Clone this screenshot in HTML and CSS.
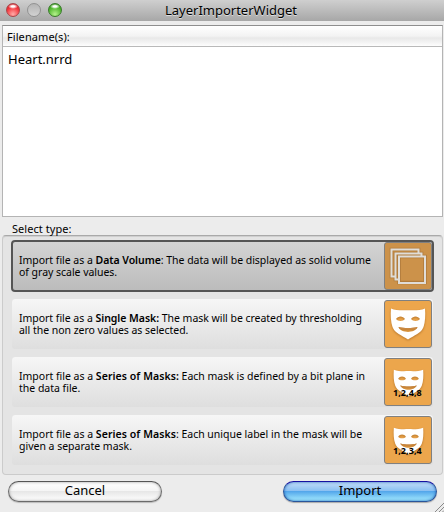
FILE: index.html
```html
<!DOCTYPE html>
<html lang="en">
<head>
<meta charset="utf-8">
<title>LayerImporterWidget</title>
<link rel="stylesheet" href="styles.css">
</head>
<body>
<svg class="defs" width="0" height="0">
  <defs>
    <symbol id="mask" viewBox="0 0 36 32">
      <path fill="#fff" fill-rule="evenodd" d="M1 .5C6 2.6 12 2.4 18 2.2C24 2.4 30 2.6 35 .5C35.6 7 35.2 14 33.5 19C31.5 25 24 27.500 18 31.500C12 27.500 4.500 25 2.500 19C.8 14 .4 7 1 .5ZM6 11C8 7.500 13 7.500 15 11C13 13.600 8 13.600 6 11ZM21 11C23 7.500 28 7.500 30 11C28 13.600 23 13.600 21 11ZM8.500 19C14 20.500 22 20.500 27.500 19C25 25.500 11 25.500 8.500 19Z"/>
      <path fill="#c98842" d="M8.500 19C14 20.500 22 20.500 27.500 19L26.500 20.700C22 21.700 14 21.700 9.500 20.700Z"/>
    </symbol>
  </defs>
</svg>
<div class="window">
  <header class="titlebar">
    <div class="lights"><i class="light red"></i><i class="light gray"></i><i class="light green"></i></div>
    <h1>LayerImporterWidget</h1>
  </header>
  <main>
    <section class="files">
      <div class="files-head">Filename(s):</div>
      <div class="files-row">Heart.nrrd</div>
    </section>
    <div class="group-label">Select type:</div>
    <section class="group">
      <div class="option selected">
        <p>Import file as a <b>Data Volume</b>: The data will be displayed as solid volume<br>of gray scale values.</p>
        <div class="icon"><svg width="46" height="46" viewBox="0 0 46 46"><g fill="#cc924a" stroke="#b07b3c" stroke-width="3.600"><path d="M6.500 6.500h27v27h-27z"/><path d="M10.500 10.500h26v26h-26z"/><path d="M14 13.500h26v26h-26z"/></g><g fill="none" stroke="#e0ddd8" stroke-width="2"><path d="M10 33.500H6.500v-27h27V10"/><path d="M13.500 36.500h-3v-26h26v3"/><path d="M14 13.500h26v26.500h-26z"/></g></svg></div>
      </div>
      <div class="option">
        <p>Import file as a <b>Single Mask:</b> The mask will be created by thresholding<br>all the non zero values as selected.</p>
        <div class="icon"><svg class="big" width="36" height="32"><use href="#mask"/></svg></div>
      </div>
      <div class="option series">
        <p>Import file as a <b>Series of Masks:</b> Each mask is defined by a bit plane in<br>the data file.</p>
        <div class="icon"><svg class="small" width="31" height="28"><use href="#mask"/></svg><span class="nums">1,2,4,8</span></div>
      </div>
      <div class="option series">
        <p>Import file as a <b>Series of Masks</b>: Each unique label in the mask will be<br>given a separate mask.</p>
        <div class="icon"><svg class="small" width="31" height="28"><use href="#mask"/></svg><span class="nums">1,2,3,4</span></div>
      </div>
    </section>
  </main>
  <footer>
    <button class="btn">Cancel</button>
    <button class="btn primary">Import</button>
  </footer>
  <svg class="grip" width="9" height="9"><path d="M0 9L9 0M4 9L9 4M7.500 9L9 7.500" stroke="#8a8a8a" fill="none"/></svg>
</div>
</body>
</html>
```
FILE: styles.css
```css
* { box-sizing: border-box; }
body { margin: 0; font-family: "Noto Sans", sans-serif; color: #000; }
.defs { position: absolute; }
.window { position: relative; width: 444px; height: 512px; background: #ececec; overflow: hidden; }
.titlebar { position: relative; height: 21px; background: linear-gradient(#cfcfcf, #a7a7a7); }
.titlebar h1 { margin: 0; text-align: center; font-size: 13px; font-weight: 400; line-height: 21px; padding-left: 18px; text-shadow: 0 1px 0 #ddd; }
.lights { position: absolute; left: 6px; top: 3px; display: flex; gap: 7px; }
.light { width: 14px; height: 14px; border-radius: 50%; border: 1px solid #777; }
.red { background: radial-gradient(ellipse 5px 2.500px at 50% 20%, #fff 0 30%, transparent), radial-gradient(circle at 50% 85%, #ffaca8, #f4333a 60%, #bd0f18); border-color: #a8474a; }
.gray { background: linear-gradient(#b4b4b4, #d2d2d2); border-color: #929292; }
.green { background: radial-gradient(ellipse 5px 2.500px at 50% 20%, #fff 0 30%, transparent), radial-gradient(circle at 50% 85%, #b4f18b, #4fb62d 60%, #21820d); border-color: #397a2b; }
main { padding: 4px 1px 0 2px; }
.files { height: 192px; border: 1px solid #b4b4b4; border-top-color: #8e8e8e; background: #fff; white-space: nowrap; width: 441px; }
.files-head { height: 21px; border-bottom: 1px solid #b9b9b9; background: linear-gradient(#fff, #f3f3f3 50%, #e8e8e8 60%, #fdfdfd); font-size: 11px; letter-spacing: .08px; line-height: 22px; padding-left: 4px; }
.files-row { font-size: 13px; line-height: 24px; padding-left: 5px; }
.group-label { height: 18px; padding: 4px 0 0 10px; font-size: 11px; letter-spacing: .06px; line-height: 15px; }
.group { height: 240px; border: 1px solid #cbcbcb; border-top-color: #a9a9a9; box-shadow: inset 0 1px 0 #cfcfcf; border-radius: 4px; background: #e4e4e4; padding: 4px 8px 0 8px; display: flex; flex-direction: column; gap: 6px; }
.option { height: 52px; border-radius: 4px; background: linear-gradient(#f6f6f6, #dedede); border: 1px solid #e4e4e4; padding: 1px 1px 1px 7px; display: flex; justify-content: space-between; align-items: center; }
.option p { margin: 0; font-size: 10.500px; letter-spacing: -.03px; line-height: 12px; white-space: nowrap; }
.option b { font-weight: 600; letter-spacing: -.04px; }
.series p { letter-spacing: -.01px; }
.series b { font-weight: 600; letter-spacing: .07px; }
.selected { border: 2px solid #555; background: linear-gradient(#d4d4d4, #bcbcbc); padding: 0 0 0 6px; }
.icon { position: relative; flex: none; width: 48px; height: 48px; border: 1px solid #808080; border-radius: 3px; background: #eca64c; }
.selected .icon { background: #cc924a; }
.icon svg { display: block; }
.icon .big, .icon .small { margin: 7px 0 0 5px; filter: drop-shadow(0 1px 1px #b9772b); }
.icon .small { margin: 10px 0 0 8px; }
.nums { position: absolute; left: 8px; top: 28px; font-size: 9px; letter-spacing: .08px; line-height: 12px; font-weight: 700; }
footer { display: flex; justify-content: space-between; padding: 6px 7px 0 8px; }
.btn { width: 154px; height: 21px; border: 1px solid #6a6a6a; border-top-color: #555; border-radius: 11px; padding: 0; font: 13px/17px "Noto Sans", sans-serif; color: #000; background: linear-gradient(#fff, #f5f5f5 45%, #e7e7e7 50%, #fff); box-shadow: inset 0 0 3px #999, 0 1px 1px #bbb; }
.btn { padding-bottom: 2px; }
.primary { border-color: #29559b; border-top-color: #1712a0; background: linear-gradient(#c4def8, #8cc1f2 45%, #54a7eb 50%, #a6edff); box-shadow: inset 0 0 3px #1d62b8, 0 1px 1px #aaa; }
.grip { position: absolute; right: 0; bottom: 0; }
```
